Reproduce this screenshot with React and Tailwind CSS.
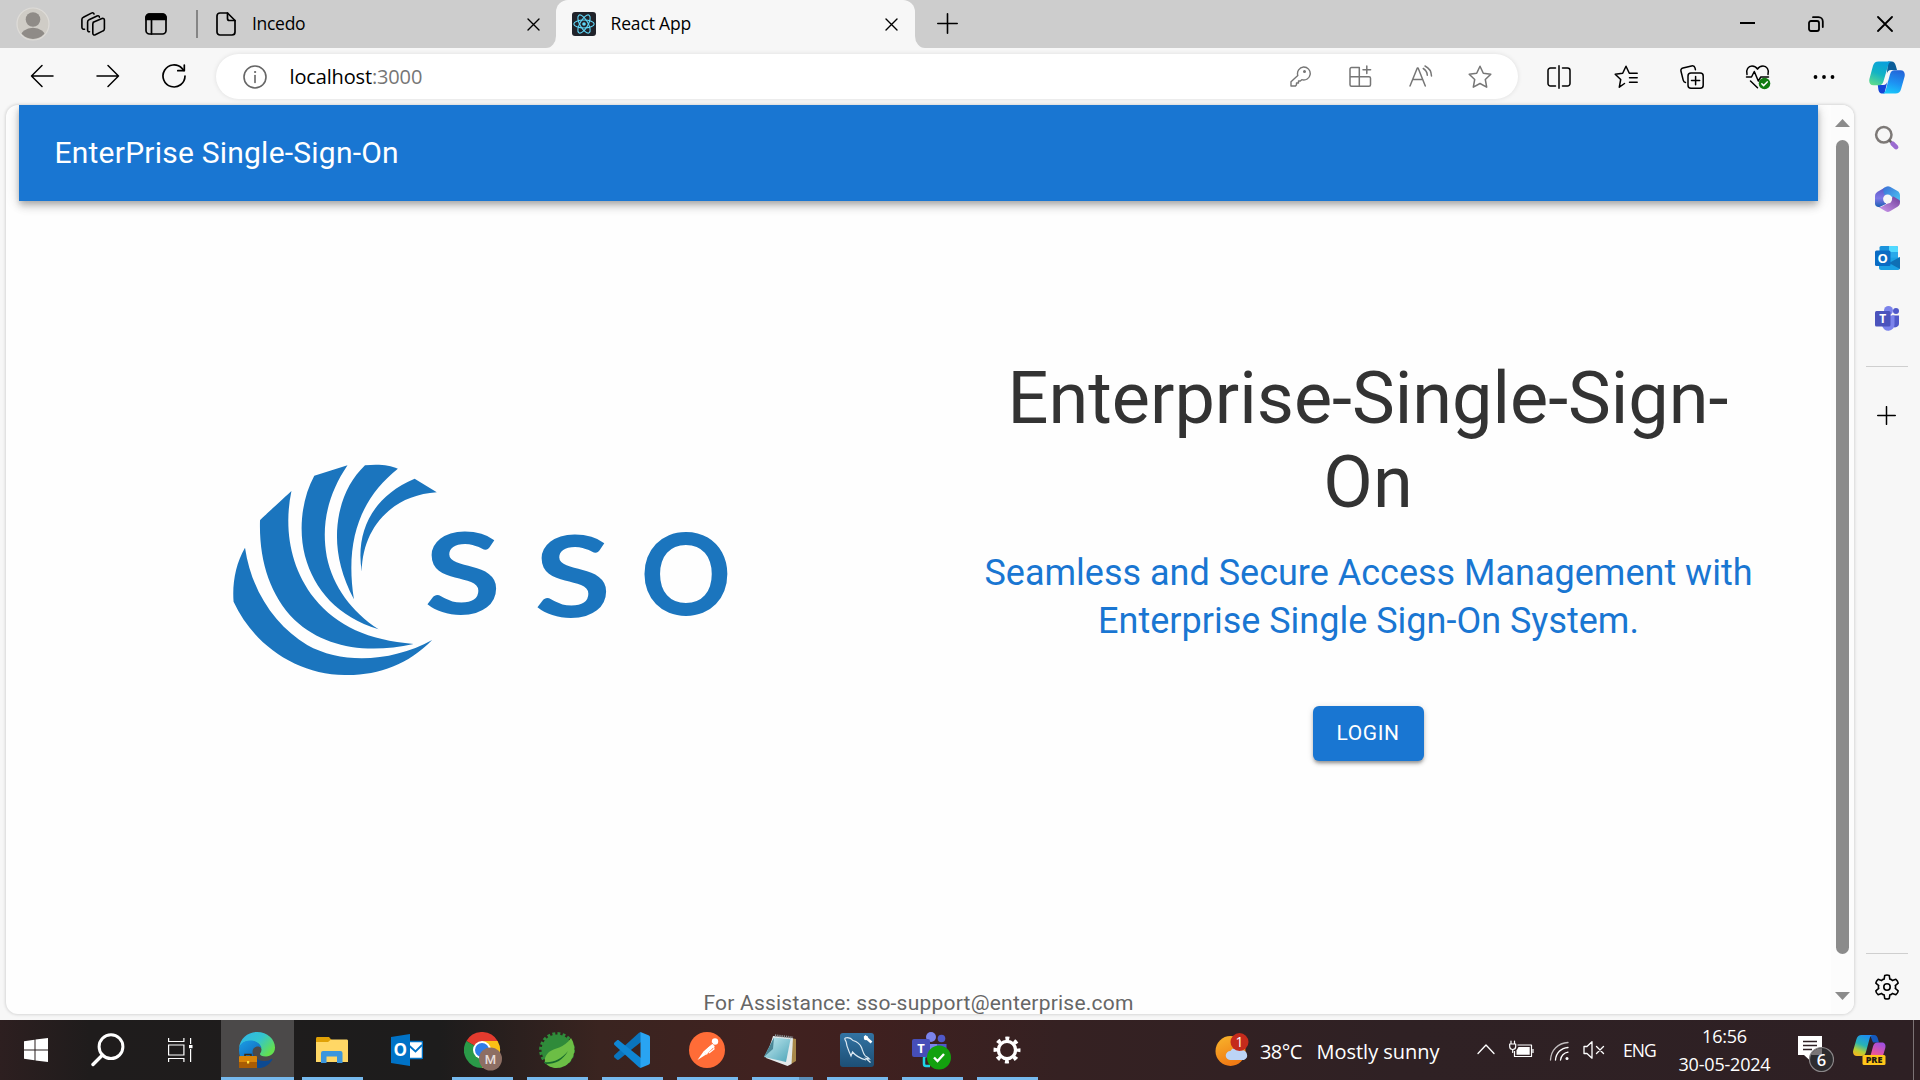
import React from "react";

const UI = "font-['Open_Sans','Noto_Sans',sans-serif]";

function Icon({ w = 24, h = 24, vb, children, sw = 1.5, className = "" }) {
  return (
    <svg
      width={w}
      height={h}
      viewBox={vb || `0 0 ${w} ${h}`}
      fill="none"
      stroke="currentColor"
      strokeWidth={sw}
      strokeLinecap="round"
      strokeLinejoin="round"
      className={`block shrink-0 ${className}`}
    >
      {children}
    </svg>
  );
}

function Slot({ className = "", children }) {
  return <div className={`flex shrink-0 items-center justify-center ${className}`}>{children}</div>;
}

const STAR = "M12 1.2l3.3 7 7.5 1-5.5 5.3 1.4 7.7L12 18.5l-6.7 3.7 1.4-7.7L1.2 9.2l7.5-1z";

function CloseX() {
  return (
    <Icon w={13} h={13} sw={1.4}>
      <path d="M1 1l11 11M12 1L1 12" />
    </Icon>
  );
}

function ReactFavicon() {
  return (
    <Icon sw={1.1}>
      <rect width="24" height="24" rx="3" fill="#20232a" stroke="none" />
      <g stroke="#61dafb">
        <ellipse cx="12" cy="12" rx="10.2" ry="4" />
        <ellipse cx="12" cy="12" rx="10.2" ry="4" transform="rotate(60 12 12)" />
        <ellipse cx="12" cy="12" rx="10.2" ry="4" transform="rotate(120 12 12)" />
        <circle cx="12" cy="12" r="1.8" fill="#61dafb" stroke="none" />
      </g>
    </Icon>
  );
}

function TabBar() {
  return (
    <div className="flex h-12 shrink-0 items-stretch bg-[#cdcdcd] text-black">
      <Slot className="w-[66px]">
        <svg width="34" height="34" viewBox="0 0 34 34">
          <defs>
            <clipPath id="avatar"><circle cx="17" cy="17" r="15" /></clipPath>
          </defs>
          <circle cx="17" cy="17" r="16" fill="#cfccc6" stroke="#dedcd8" strokeWidth="1.2" />
          <g clipPath="url(#avatar)" fill="#8f8b87">
            <circle cx="17" cy="12.5" r="7.3" />
            <ellipse cx="17" cy="30" rx="12.5" ry="9.2" />
          </g>
        </svg>
      </Slot>
      <Slot className="w-[53px]">
        <Icon w={26} h={26} sw={1.6}>
          <path d="M13.2 11.2l8.8-3.7c1.3-.5 2.4.2 2.4 1.5v8.700c0 1-.5 1.800-1.400 2.200l-7.700 3.800c-1.300.600-2.500 0-2.500-1.400v-9.300c0-.8.1-1.400.9-1.800z" />
          <path d="M9.500 20.800c-1.200.1-1.900-.6-1.900-1.700V11c0-1 .5-1.800 1.400-2.200l8-3.800c1.200-.6 2.400-.1 2.400 1.200" />
          <path d="M4.500 18.200c-1.500.1-2.600-.5-2.600-1.900V8.600c0-1 .5-1.900 1.500-2.300l8-4.200c1.200-.6 2.600-.3 2.600 1" />
        </Icon>
      </Slot>
      <Slot className="w-[74px]">
        <Icon w={22} h={22} sw={1.7}>
          <rect x="1" y="1" width="20" height="20" rx="3.500" />
          <path d="M1 6.500V4.500A3.500 3.500 0 0 1 4.500 1h13A3.500 3.500 0 0 1 21 4.500v2z" fill="currentColor" />
          <path d="M6.500 7v14" />
        </Icon>
      </Slot>
      <div className="my-[10px] ml-[3px] w-0.5 bg-[#858585]" />
      <Slot className="ml-[18px] w-5">
        <Icon w={20} h={24} sw={1.700}>
          <path d="M4 1h7.500L19 8.500V20a3 3 0 0 1-3 3H4a3 3 0 0 1-3-3V4a3 3 0 0 1 3-3z" />
          <path d="M11.500 1v5.500a2 2 0 0 0 2 2H19" />
        </Icon>
      </Slot>
      <div className="flex w-[291px] items-center pb-px pl-[16px] text-[17.500px] tracking-[-0.3px]">Incedo</div>
      <Slot className="w-[13px] pt-px"><CloseX /></Slot>
      <div className="flex w-[16px] items-end">
        <svg width="16" height="12" viewBox="0 0 16 12"><path d="M16 0v12H6A10 12 0 0 0 16 0z" fill="#f7f7f7" /></svg>
      </div>
      <div className="flex w-[359px] items-center rounded-t-[12px] bg-[#f7f7f7] pl-[16px]">
        <ReactFavicon />
        <div className="w-[289px] pb-px pl-[14.500px] text-[17.500px] tracking-[-0.15px]">React App</div>
        <Slot className="w-[13px] pt-px"><CloseX /></Slot>
      </div>
      <div className="flex w-[16px] items-end">
        <svg width="16" height="12" viewBox="0 0 16 12"><path d="M0 0v12H10A10 12 0 0 1 0 0z" fill="#f7f7f7" /></svg>
      </div>
      <Slot className="w-[32px] pb-px">
        <Icon w={21} h={21} sw={1.6}><path d="M10.500 .8v19.400M.8 10.500h19.400" /></Icon>
      </Slot>
      <div className="flex-1" />
      <Slot className="w-[69px] pb-0.5">
        <Icon w={15} h={2} sw={2}><path d="M0 1h15" /></Icon>
      </Slot>
      <Slot className="w-[69px] pr-px">
        <Icon w={16} h={16} sw={1.800}>
          <rect x="1" y="5" width="10" height="10" rx="2" />
          <path d="M5 1.200h5.500A4.300 4.300 0 0 1 14.800 5.500V11" />
        </Icon>
      </Slot>
      <Slot className="w-[69px] pb-px pr-px">
        <Icon w={16} h={16} sw={1.800}><path d="M1 1l14 14M15 1L1 15" /></Icon>
      </Slot>
    </div>
  );
}

function CopilotLogo() {
  return (
    <svg width="36" height="33" viewBox="0 0 36 33" className="mt-px">
      <defs>
        <linearGradient id="cpA" x1="0.6" y1="0" x2="0.2" y2="1">
          <stop offset="0" stopColor="#0aa0dc" /><stop offset=".5" stopColor="#12b3c4" /><stop offset="1" stopColor="#5fdc8c" />
        </linearGradient>
        <linearGradient id="cpB" x1="0.7" y1="0" x2="0.4" y2="1">
          <stop offset="0" stopColor="#2465d8" /><stop offset=".55" stopColor="#1d93f3" /><stop offset="1" stopColor="#19c6fb" />
        </linearGradient>
      </defs>
      <path d="M19 .5h3.500c2.500 0 3.600 1.800 4.300 4.200l1.200 4.300h-6c-2.400 0-3.500 1.500-4.200 4z" fill="#0b5d99" />
      <path d="M15.500 32.500h-2c-3 0-3.800-2-4.200-4.500l-.5-4h5.500c2.400 0 3.500-1.500 4.200-4z" fill="#1445d6" />
      <path d="M9.500.5H23c-2 0-3.100 1.300-3.800 3.700l-4.700 16c-.8 2.700-2 4-4.500 4H4.500C1 24.200-.3 21.500.4 18L4 4.800C4.900 1.900 6.500.5 9.500.5z" fill="url(#cpA)" />
      <path d="M26.500 32.500H13c2 0 3.100-1.300 3.800-3.700l4.200-15.500c.8-2.700 2-4 4.500-4h6c3.500 0 4.800 2.700 4.100 6.200L32 28.200c-.9 2.900-2.500 4.300-5.500 4.300z" fill="url(#cpB)" />
    </svg>
  );
}

function Toolbar() {
  return (
    <div className="flex h-[57px] shrink-0 items-center pl-[9px] text-black">
      <Slot className="w-[66px] pb-0.5">
        <Icon><path d="M23 12H1.500M12 1.500L1.500 12 12 22.500" /></Icon>
      </Slot>
      <Slot className="w-[66px] pb-0.5">
        <Icon><path d="M1 12h21.500M12 1.500L22.500 12 12 22.500" /></Icon>
      </Slot>
      <Slot className="w-[66px] pb-px">
        <Icon sw={1.700}>
          <path d="M23 12A11 11 0 1 1 20 4.400l1.800 1.900" />
          <path d="M22.300 1v5.700h-6.500" />
        </Icon>
      </Slot>
      <div className="ml-[9px] flex h-[45px] w-[1302px] shrink-0 items-center rounded-full bg-white pl-[27px] pr-2 text-[#767676] shadow-[0_0_5px_rgba(0,0,0,0.10)]">
        <Icon sw={1.6} className="text-[#666]">
          <circle cx="12" cy="12" r="11" />
          <path d="M12 10.500v7" />
          <circle cx="12" cy="7" r=".6" fill="currentColor" strokeWidth="1" />
        </Icon>
        <div className="flex-1 pl-[22.500px] text-[20px] leading-none tracking-[-0.15px]">
          <span className="text-black">localhost</span>:3000
        </div>
        <Slot className="w-[60px]">
          <Icon w={21} h={21} sw={1.4}>
            <circle cx="14.500" cy="5.500" r=".8" fill="currentColor" />
            <path d="M13.500 1a6.500 6.500 0 1 1-1.700 12.700L10.300 15H8.500v2H6.500v1.800L5.500 20H1v-4.300l6.800-6.300A6.500 6.500 0 0 1 13.500 1z" />
          </Icon>
        </Slot>
        <Slot className="w-[60px]">
          <Icon w={23} h={23}>
            <path d="M2.500 2.500h7.800v18.700H2.500A1.500 1.500 0 0 1 1 19.700V4a1.500 1.500 0 0 1 1.500-1.500zM1 11.800h19a1.500 1.500 0 0 1 1.500 1.500v6.400a1.500 1.500 0 0 1-1.500 1.500h-9.700M17.800 1v7.600M14 4.800h7.600" />
          </Icon>
        </Slot>
        <Slot className="w-[60px] pb-0.5 pl-0.5">
          <Icon w={24} h={22}>
            <path d="M1 21L8.300 3h.8L16.300 21M3.700 14.500h10M14.300 3.500a8.500 8.500 0 0 1 4 6.800M16 1a11.500 11.500 0 0 1 6.500 10" />
          </Icon>
        </Slot>
        <Slot className="w-[60px]">
          <Icon><path d={STAR} /></Icon>
        </Slot>
      </div>
      <div className="ml-[8px] flex">
        <Slot className="w-[66px]">
          <Icon>
            <path d="M8.500 3h-5A2.500 2.500 0 0 0 1 5.500v13A2.500 2.500 0 0 0 3.500 21h5M15.500 3h5A2.500 2.500 0 0 1 23 5.500v13a2.500 2.500 0 0 1-2.500 2.500h-5M12 .8v22.400" />
          </Icon>
        </Slot>
        <Slot className="w-[66px] pl-px">
          <Icon>
            <path d="M10.500 18.500L5.300 22.200l1.400-7.700L1.200 9.200l7.500-1 3.300-7 3.300 7M15.500 8.200h7.700M15.500 12.700h7.700M15.500 17.200h7.700" />
          </Icon>
        </Slot>
        <Slot className="w-[66px] pl-px">
          <Icon>
            <rect x="8" y="8" width="15.200" height="15.200" rx="3" />
            <path d="M15.600 11.500v8.200M11.500 15.600h8.200M5.500 17.500c-1.300-.2-2-1-2.300-2.300L1 6.300C.6 4.800 1.400 3.400 3 3L11.500 .900c1.700-.4 3.100.4 3.500 2l.4 1.800" />
          </Icon>
        </Slot>
        <Slot className="w-[66px] pl-0.5">
          <Icon w={26} h={26}>
            <path d="M2 10.500C.6 5.500 3.500 2 7 2c2.700 0 4.500 1.300 5.500 3.200C13.500 3.300 15.500 2 18 2c3.500 0 6.500 3.500 5 8.500M1.500 13h5l2.800-5.500 4 9.500 2.500-4h7.700M5.500 17l7 6.800" />
            <circle cx="19.500" cy="19.500" r="5.800" fill="#107c10" stroke="none" />
            <path d="M16.800 19.700l1.900 1.900 3.500-3.700" stroke="#fff" />
          </Icon>
        </Slot>
        <Slot className="w-[66px] pl-0.5">
          <Icon w={22} h={4}>
            <g fill="currentColor" stroke="none"><circle cx="2.500" cy="2" r="1.900" /><circle cx="11" cy="2" r="1.900" /><circle cx="19.500" cy="2" r="1.900" /></g>
          </Icon>
        </Slot>
        <Slot className="w-[62px]"><CopilotLogo /></Slot>
      </div>
    </div>
  );
}

function SsoLogo() {
  return (
    <svg width="560" height="270" viewBox="0 0 1568 810" preserveAspectRatio="none" fill="#1b75be">
      <path d="M126 353C145 490 215 590 300 645C400 705 540 695 650 630C580 705 500 737 405 735C270 733 150 645 94 515C90 460 100 400 126 353z" />
      <path d="M256 183C170 268 170 268 168 272C165 390 195 495 265 570C350 655 470 672 598 642C470 630 385 590 320 505C250 410 235 290 256 183z" />
      <path d="M413 106L320 137C285 205 275 300 294 378C320 480 385 560 500 598C425 545 372 470 355 380C338 280 360 190 413 106z" />
      <path d="M462 106C505 102 530 106 554 116C450 205 405 330 431 508C385 415 375 330 390 250C402 190 425 145 462 106z" />
      <path d="M601 146L663 187C540 195 455 290 453 425C435 310 480 200 601 146z" />
      <g className="font-['Lato',sans-serif] font-bold">
        <text transform="translate(628 553) scale(3.08 3)" fontSize="113" textLength="70" lengthAdjust="spacingAndGlyphs">S</text>
        <text transform="translate(936 561) scale(3.08 3)" fontSize="113" textLength="70" lengthAdjust="spacingAndGlyphs">S</text>
        <text transform="translate(1233 556) scale(2.75 3)" fontSize="113" textLength="93" lengthAdjust="spacingAndGlyphs">O</text>
      </g>
    </svg>
  );
}

function WebPage() {
  return (
    <div className="ml-[6px] mb-[6px] flex w-[1848px] shrink-0 overflow-hidden rounded-[12px] bg-[#fefefe] font-['Roboto',sans-serif] shadow-[0_0_3px_1px_rgba(0,0,0,0.13)]">
      <div className="flex w-[1825px] flex-col pl-[13px]">
        <header className="flex h-24 w-[1799px] shrink-0 items-center bg-[#1976d2] pl-[35.500px] text-[30px] leading-none text-white shadow-[0_3px_6px_-1px_rgba(0,0,0,0.2),0_6px_8px_0_rgba(0,0,0,0.14),0_1px_15px_0_rgba(0,0,0,0.12)]">
          <span className="tracking-[0.225px]">EnterPrise Single-Sign-On</span>
        </header>
        <main className="flex h-[785px] w-[1799px] shrink-0">
          <div className="w-[899px] pl-[181px] pt-[229px]"><SsoLogo /></div>
          <div className="flex w-[900px] flex-col items-center pt-[156px] text-center">
            <h1 className="w-[740px] text-[72px] leading-[84px] text-[#333]">
              Enterprise-Single-Sign-<br />On
            </h1>
            <h2 className="mt-[24px] whitespace-nowrap pl-px text-[36px] leading-[48px] text-[#1976d2]">
              Seamless and Secure Access Management with<br />Enterprise Single Sign-On System.
            </h2>
            <button className="mt-[61px] h-[55px] w-[111px] rounded-[6px] bg-[#1976d2] text-[21px] leading-none tracking-[0.6px] text-white shadow-[0_3px_3px_-1px_rgba(0,0,0,0.25),0_3px_4px_0_rgba(0,0,0,0.14),0_1px_7px_0_rgba(0,0,0,0.12)]">
              LOGIN
            </button>
          </div>
        </main>
        <footer className="w-[1799px] text-center text-[21px] leading-[34px] tracking-[0.22px] text-[#666]">
          For Assistance: sso-support@enterprise.com
        </footer>
      </div>
      <div className="flex w-[23px] flex-col items-center bg-[#fcfcfc] pt-[14px]">
        <svg width="15" height="8" viewBox="0 0 15 8"><path d="M7.500 0L15 8H0z" fill="#8b8b8b" /></svg>
        <div className="mt-[13px] h-[814px] w-[13px] rounded-full bg-[#8b8b8b]" />
        <svg className="mt-[38px]" width="15" height="8" viewBox="0 0 15 8"><path d="M7.500 8L15 0H0z" fill="#8b8b8b" /></svg>
      </div>
    </div>
  );
}

const lobes = Array.from({ length: 6 }, (_, i) => {
  const p = (deg, r) => {
    const a = ((i * 60 + deg - 90) * Math.PI) / 180;
    return `${(13 + r * Math.cos(a)).toFixed(2)} ${(13 + r * Math.sin(a)).toFixed(2)}`;
  };
  return `${i ? "L" : "M"}${p(-20, 8.4)}L${p(-11, 11.8)}Q${p(0, 12.5)} ${p(11, 11.8)}L${p(20, 8.4)}Q${p(30, 8.9)} ${p(40, 8.4)}`;
}).join("") + "z";

function Sidebar() {
  return (
    <aside className="flex flex-1 flex-col items-center pt-[20px]">
      <Icon w={26} h={26} className="mr-px">
        <circle cx="9.800" cy="9.800" r="7.700" stroke="#7d7977" strokeWidth="2.500" />
        <path d="M15.500 15.500l1.500 1.500" stroke="#6b6867" strokeWidth="2.500" />
        <path d="M18.600 18.600l3.500 3.500" stroke="#9a6bd0" strokeWidth="4.600" />
      </Icon>
      <svg className="ml-px mt-[35px]" width="25" height="26" viewBox="0 0 25 26">
        <defs>
          <linearGradient id="m1" x1="0" y1="0" x2="0" y2="1"><stop offset="0" stopColor="#5a55c4" /><stop offset=".55" stopColor="#7f78e6" /><stop offset="1" stopColor="#1b5fb4" /></linearGradient>
          <linearGradient id="m2" x1="0" y1="0" x2="1" y2="1"><stop offset="0" stopColor="#3a6fd6" /><stop offset="1" stopColor="#4dc8f4" /></linearGradient>
          <linearGradient id="m3" x1="0" y1="1" x2="1" y2="0"><stop offset="0" stopColor="#cf9cf0" /><stop offset="1" stopColor="#6f3d99" /></linearGradient>
        </defs>
        <path d="M10 1.500L3 5.500C1 6.700 0 8 0 10.500v7C0 20 2 21.500 4.500 21l6.500-3V8.500L10 1.500z" fill="url(#m1)" />
        <path d="M8.500 2.200L11 .8c1.500-.9 2.500-.9 4 0L22.500 5C24.200 6 25 7.500 25 9.500V16l-9-5.500-5-1.500c-1.500 0-3-1-2.500-6.800z" fill="url(#m2)" />
        <path d="M25 15.500c0 3-.6 4-2.500 5.200L15 25.200c-1.500.9-2.800.9-4.300 0L3.500 21c2 .3 3.500-.3 5-1.200l6-3.500 3.500-6 5 3c1.300.7 2 1.500 2 2.200z" fill="url(#m3)" />
        <circle cx="12.600" cy="13" r="4.500" fill="#f7f7f7" />
      </svg>
      <svg className="ml-px mt-[34px]" width="25" height="24" viewBox="0 0 25 24">
        <rect x="4.500" width="18.500" height="14" rx="1.500" fill="#1b93dc" />
        <path d="M14 0h7.500A1.500 1.500 0 0 1 23 1.500V6h-9z" fill="#50d9ff" />
        <path d="M14 6h9v6h-9z" fill="#28a8ea" />
        <path d="M4 12l21-.5V22a2 2 0 0 1-2 2H6a2 2 0 0 1-2-2z" fill="#1aa0e4" />
        <path d="M25 11v12L14 17z" fill="#0f6fb5" />
        <rect y="4.500" width="15.500" height="15.500" rx="1.500" fill="#0a6cc4" />
        <text x="7.800" y="17" textAnchor="middle" fill="#fff" className="font-['Open_Sans',sans-serif] text-[13px] font-bold">O</text>
      </svg>
      <svg className="ml-px mt-[36px]" width="25" height="25" viewBox="0 0 25 25">
        <circle cx="13.500" cy="4.500" r="4.500" fill="#7b83eb" /><circle cx="21" cy="5" r="3" fill="#5059c9" />
        <path d="M17 9.500h7v7.500a4 4 0 0 1-7 3z" fill="#5059c9" />
        <path d="M7 9.500h12.500V18a6 6 0 0 1-12.500 1z" fill="#7b83eb" />
        <rect y="5" width="15.500" height="15.500" rx="1.500" fill="#4b53bc" />
        <text x="7.800" y="17" textAnchor="middle" fill="#fff" className="font-['Open_Sans',sans-serif] text-[12px] font-bold">T</text>
      </svg>
      <div className="mr-px mt-[35px] h-px w-[42px] bg-[#cfcfcf]" />
      <Icon w={19} h={19} sw={1.500} className="mr-0.5 mt-[39px]"><path d="M9.500 .700v17.600M.700 9.500h17.600" /></Icon>
      <div className="mr-px mt-[528px] h-px w-[42px] bg-[#cfcfcf]" />
      <Icon w={26} h={26} sw={1.600} className="mr-px mt-5">
        <path d={lobes} />
        <circle cx="13" cy="13" r="3.200" />
      </Icon>
    </aside>
  );
}

function EdgeIcon() {
  return (
    <svg width="36" height="36" viewBox="0 0 36 36" className="mr-0.5">
      <defs>
        <linearGradient id="eg" x1="0" y1="0" x2="1" y2=".6"><stop offset="0" stopColor="#2fb4ea" /><stop offset=".55" stopColor="#33c5cf" /><stop offset="1" stopColor="#64e04f" /></linearGradient>
        <linearGradient id="eb" x1="0" y1="0" x2=".6" y2="1"><stop offset="0" stopColor="#1b9ee6" /><stop offset="1" stopColor="#0f5cb0" /></linearGradient>
      </defs>
      <path d="M0 16C1 6.500 9 0 18 0c10.500 0 18 7.500 18 15.500C36 21 32 24.500 27 24.500c-4 0-6-1.200-6-2.500 0-1 1.500-1.800 1.500-4.500C22 13 17.500 9 11.500 9 6 9 2 11.500 0 16z" fill="url(#eg)" />
      <path d="M0 18C0 12 5 8.500 11 8.500c6.500 0 11 4 11.500 7.500-2-2-5.500-2.500-8 .5C12 20 14 28 23 36H17C7 36 0 28 0 18z" fill="url(#eb)" />
      <path d="M14 20c0 6 6 9 12 9 3 0 5-1 6.500-2 .8-.4 1 .2.600.9C30 33 25 36 19 36c-4 0-6-6-5-16z" fill="#0d4a91" />
      <rect y="24" width="18" height="12" rx="1" fill="#d98509" /><rect y="30" width="18" height="6" fill="#a85c04" />
      <path d="M6 24v-1.500h6V24" fill="none" stroke="#3d2a10" strokeWidth="1.500" /><rect x="8" y="29" width="2.200" height="2.500" fill="#ffe03a" />
    </svg>
  );
}

function FolderIcon() {
  return (
    <svg width="32" height="26" viewBox="0 0 32 26">
      <path d="M0 1.500C0 .7.500 0 1.500 0H13l2.500 3L13 7H0z" fill="#e0a106" />
      <path d="M0 5h12l3-2.500h15.500c1 0 1.500.5 1.500 1.500v21H0z" fill="#ffd765" />
      <path d="M5 26V16a2 2 0 0 1 2-2h17.500a2 2 0 0 1 2 2v10h-5.500v-6.500H10.500V26z" fill="#3b96dd" />
    </svg>
  );
}

function OutlookIcon() {
  return (
    <svg width="32" height="32" viewBox="0 0 32 32">
      <rect x="17" y="7.500" width="14.500" height="17" rx="1" fill="#fff" stroke="#0072c6" strokeWidth="1.500" />
      <path d="M18.500 12l6 5.500L31 11" fill="none" stroke="#0072c6" strokeWidth="1.800" />
      <path d="M0 3l19-3v32L0 29z" fill="#0072c6" />
      <text x="9.200" y="22" textAnchor="middle" fill="#fff" className="font-['Open_Sans',sans-serif] text-[17px] font-bold">O</text>
    </svg>
  );
}

function ChromeIcon() {
  return (
    <svg width="40" height="40" viewBox="0 0 40 40" className="ml-1 mt-[3px]">
      <path d="M18 18L2.400 9A18 18 0 0 1 33.600 9z" fill="#e33b2e" />
      <path d="M18 18V9h15.600A18 18 0 0 1 18 36z" fill="#fbc116" />
      <path d="M18 18l7.800 4.500L18 36A18 18 0 0 1 2.400 9z" fill="#2a9a48" />
      <circle cx="18" cy="18" r="9" fill="#fff" /><circle cx="18" cy="18" r="7" fill="#2f7de9" />
      <circle cx="26.500" cy="27" r="11.500" fill="#8d6e63" />
      <text x="26.500" y="31.800" textAnchor="middle" fill="#e6dcd8" className="font-['Roboto',sans-serif] text-[13px] font-medium">M</text>
    </svg>
  );
}

function SpringIcon() {
  return (
    <svg width="36" height="36" viewBox="0 0 36 36">
      <circle cx="18" cy="18" r="15.500" fill="#2f8b3a" />
      <circle cx="18" cy="18" r="16.300" fill="none" stroke="#2f8b3a" strokeWidth="3.200" strokeDasharray="2.900 2.220" />
      <path d="M32 6c3 5 4.500 11 2.500 17-2.500 8-9 13-17 13-4 0-8.500-1.500-11-5-1.500-3-.500-7.500 3.500-11 5-4 15-3.500 22-14z" fill="#6cbe45" />
      <path d="M5 30c8 1 17-2 24-11-5 9-12 13-22 13z" fill="#176b2c" />
    </svg>
  );
}

function VsCodeIcon() {
  return (
    <svg width="36" height="36" viewBox="0 0 36 36">
      <path d="M27 0v10L5 27.500c-.8.600-1.600.5-2.200 0L.5 25.400c-.7-.7-.7-1.600 0-2.300L25 .8z" fill="#0a74bd" />
      <path d="M27 36V26L5 8.500c-.8-.6-1.600-.5-2.200 0L.5 10.600c-.7.7-.7 1.600 0 2.300L25 35.200z" fill="#0f86d3" />
      <path d="M26.500 0L35 3.600c.7.300 1 .9 1 1.600v25.600c0 .7-.3 1.300-1 1.600L26.500 36z" fill="#29a4f2" />
    </svg>
  );
}

function PostmanIcon() {
  return (
    <svg width="36" height="36" viewBox="0 0 36 36">
      <circle cx="18" cy="18" r="18" fill="#ff6c37" />
      <circle cx="26" cy="9.500" r="3.200" fill="#fff" />
      <path d="M23 11.500l2.800 2.800-8 8.500-3.500-3z" fill="#fff" />
      <path d="M14.500 19.500l3 2.700L8.500 28z" fill="#fff" />
      <path d="M16 17l8-6M19 21.500l6-6" stroke="#ff6c37" strokeWidth=".9" />
      <path d="M24.500 14.500l.5 2.500-5 4" stroke="#fff" strokeWidth="1.200" fill="none" />
    </svg>
  );
}

function NotepadIcon() {
  return (
    <svg width="34" height="32" viewBox="0 0 34 32" className="mr-1">
      <defs><linearGradient id="np" x1="0" y1="0" x2="1" y2="1"><stop offset="0" stopColor="#c6ecf2" /><stop offset="1" stopColor="#4ea4b8" /></linearGradient></defs>
      <path d="M28 4l5 1v22l-5 3z" fill="#a8884a" />
      <path d="M10 2l20 2-1.500 26-4 2L3 24z" fill="#e4eaec" />
      <path d="M11 3.500l16.500 1.800L23 28 1 23z" fill="url(#np)" />
      <path d="M11 3.500L1 23l9-8z" fill="#4b8797" />
      <path d="M12 1.500l18 2" stroke="#8d989b" strokeWidth="2.400" strokeDasharray="1.200 1" />
    </svg>
  );
}

function MysqlIcon() {
  return (
    <svg width="34" height="34" viewBox="0 0 34 34" fill="none">
      <defs><linearGradient id="my" x1="0" y1="0" x2="0" y2="1"><stop offset="0" stopColor="#3273a3" /><stop offset="1" stopColor="#1d4f75" /></linearGradient></defs>
      <rect width="34" height="34" rx="3" fill="url(#my)" />
      <path d="M5 5c3-1 6 0 8 2.500 4 1 7 3.500 8.500 7 1.200 3 1.500 5.500 3.500 8 1 1.200 3 1.500 4.500 3.500l-3.500-.5 4.500 4M5 5c-1 1.500 1 2.500 1.300 4.500C6.500 13 8 16 9.500 19.500l1.500 3.500 1.500-4c2.500 3 6 6 13.500 8" stroke="#dce9f2" strokeWidth="1.200" />
      <path d="M24.500 3l3 3M27 5.500l4.500 4" stroke="#fff" strokeWidth="2.600" />
      <circle cx="26" cy="5" r="2.200" fill="#fff" />
    </svg>
  );
}

function TeamsIcon() {
  return (
    <svg width="40" height="38" viewBox="0 0 40 38" className="mt-0.5">
      <circle cx="19" cy="5" r="5" fill="#7b83eb" /><circle cx="29.500" cy="6.500" r="3.800" fill="#5059c9" />
      <path d="M17 12h17.500v8H17z" fill="#5059c9" />
      <path d="M17 12h8v8h-8z" fill="#7b83eb" />
      <path d="M18 24h-4a2 2 0 0 0-2 2v6a2 2 0 0 0 2 2h4" stroke="#1ed6e6" strokeWidth="2.500" fill="none" />
      <rect y="7" width="18" height="18" rx="2" fill="#464eb8" />
      <text x="9" y="20.500" textAnchor="middle" fill="#fff" className="font-['Open_Sans',sans-serif] text-[13px] font-bold">T</text>
      <circle cx="27" cy="25.500" r="12" fill="#13a10e" />
      <path d="M22 25.500l3.500 3.500 6.500-7" stroke="#fff" strokeWidth="2.400" fill="none" />
    </svg>
  );
}

function GearIcon() {
  return (
    <svg width="28" height="28" viewBox="0 0 28 28" fill="none" stroke="#fff">
      <circle cx="14" cy="14" r="8.600" strokeWidth="3.400" />
      <circle cx="14" cy="14" r="11.600" strokeWidth="3.800" strokeDasharray="4 5.110" strokeDashoffset="2" />
    </svg>
  );
}

const APPS = [
  { id: "explorer", icon: <FolderIcon />, bar: "full" },
  { id: "outlook", icon: <OutlookIcon />, bar: "none" },
  { id: "chrome", icon: <ChromeIcon />, bar: "full" },
  { id: "spring", icon: <SpringIcon />, bar: "full" },
  { id: "vscode", icon: <VsCodeIcon />, bar: "full" },
  { id: "postman", icon: <PostmanIcon />, bar: "full" },
  { id: "notepad", icon: <NotepadIcon />, bar: "split" },
  { id: "mysql", icon: <MysqlIcon />, bar: "full" },
  { id: "teams", icon: <TeamsIcon />, bar: "full" },
  { id: "settings", icon: <GearIcon />, bar: "full" },
];

function Taskbar() {
  return (
    <div className={`flex h-[60px] shrink-0 bg-[linear-gradient(90deg,#2d1f20_0px,#1f1c1c_90px,#1d1c1c_440px,#3a2420_600px,#402220_760px,#40201f_850px,#352122_1060px,#2f2124_1400px,#2e2024_1920px)] text-white ${UI}`}>
      <Slot className="w-[72px]">
        <svg width="24" height="24" viewBox="0 0 24 24" fill="#fff"><path d="M0 3.200L10.500 1.800V11.500H0zM11.500 1.600L24 0v11.500H11.500zM0 12.500h10.500v9.700L0 20.800zM11.500 12.500H24V24l-12.500-1.600z" /></svg>
      </Slot>
      <Slot className="w-[72px] pr-px">
        <svg width="34" height="34" viewBox="0 0 34 34" fill="none" stroke="#fff" strokeLinecap="round"><circle cx="20" cy="13.700" r="11.900" strokeWidth="3" /><path d="M11.500 22L2 31.500" strokeWidth="3.400" /></svg>
      </Slot>
      <Slot className="w-[72px]">
        <svg width="25" height="24" viewBox="0 0 25 24" fill="none" stroke="#fff" strokeWidth="1.200"><path d="M.6 0v3.500h15.300V0M.6 7h15.300v10H.600zM.6 24v-3.500h15.300V24M22.600 0v6M22.600 11v13" /><path d="M21 7h3.500v3.200H21z" fill="#fff" stroke="none" /></svg>
      </Slot>
      <div className="ml-[5px] mr-px flex w-[73px] flex-col bg-[#4b4949]">
        <Slot className="h-[57px] pt-[3px]"><EdgeIcon /></Slot>
        <div className="h-[3px] bg-[#76b9ed]" />
      </div>
      {APPS.map((a) => (
        <div key={a.id} className="flex w-[75px] shrink-0 flex-col items-center">
          <Slot className="h-[57px] w-full pr-px pt-[3px]">{a.icon}</Slot>
          {a.bar !== "none" && (
            <div className="flex h-[3px] w-[61px] bg-[#76b9ed]">
              {a.bar === "split" && <div className="ml-auto w-[14px] bg-[#5a8db8]" />}
            </div>
          )}
        </div>
      ))}
      <div className="ml-[170px] flex w-[34px] items-center">
        <svg width="34" height="34" viewBox="0 0 34 34" className="-mt-0.5">
          <defs><linearGradient id="sun" x1="0" y1="0" x2=".4" y2="1"><stop offset="0" stopColor="#f8b62c" /><stop offset="1" stopColor="#f07a14" /></linearGradient></defs>
          <circle cx="15.500" cy="19" r="15" fill="url(#sun)" />
          <path d="M15 28a4.500 4.500 0 0 1 .5-9 6 6 0 0 1 10.500-.500 5 5 0 0 1 3 9.500z" fill="#bcd4f6" />
          <circle cx="24.500" cy="10" r="9" fill="#c42b1c" />
          <text x="24.500" y="15" textAnchor="middle" fill="#fff" className="text-[14px]">1</text>
        </svg>
      </div>
      <div className="flex w-[57px] items-center pl-[11px] pt-[3px] text-[20px] tracking-[-0.6px]">38°C</div>
      <div className="flex w-[171px] items-center whitespace-nowrap pl-[10.500px] pt-[3px] text-[20px] tracking-[-0.02px]">Mostly sunny</div>
      <Slot className="w-[18px] pb-0.5">
        <Icon w={18} h={12} sw={1.300}><path d="M1 10.500l8-8.500 8 8.500" /></Icon>
      </Slot>
      <Slot className="ml-[14px] w-[26px] pb-px">
        <Icon w={26} h={20} sw={1.200}>
          <path d="M8.500 5H22.500v11.500H5.500V11M24 9v4" strokeLinecap="butt" />
          <path d="M9.500 7H20.700v7.700H7.500V10.500z" fill="#fff" stroke="none" />
          <path d="M2 1v3M5.500 1v3M.7 4h6v2.500a3 3 0 0 1-6 0zM3.700 9.500v3" />
        </Icon>
      </Slot>
      <Slot className="ml-[13px] w-[22px] pt-0.5">
        <Icon w={21} h={20} sw={1.300}>
          <path d="M1.500 19C2 9 9 2 19 1.500" opacity=".7" />
          <path d="M6.500 19C7 12 12 7 19 6.500M11.500 19c.4-4 3.500-7.300 7.500-7.800" />
          <circle cx="18" cy="17.500" r="1.500" fill="#fff" stroke="none" />
        </Icon>
      </Slot>
      <Slot className="ml-[13px] w-[22px]">
        <Icon w={22} h={18} sw={1.300}>
          <path d="M1 5.500h3L9 .8v16.400L4 12.500H1zM13.500 5.500l7 7M20.500 5.500l-7 7" />
        </Icon>
      </Slot>
      <div className="ml-[18px] flex w-[54px] items-center text-[17.500px] tracking-[-0.9px]">ENG</div>
      <div className="flex w-[95px] flex-col items-center justify-center whitespace-nowrap text-[18px] leading-[28px] tracking-[-0.2px]">
        <div>16:56</div>
        <div>30-05-2024</div>
      </div>
      <div className="ml-[26px] flex w-[36px] items-center">
        <svg width="36" height="38" viewBox="0 0 36 38" className="mt-[8px]">
          <path d="M0 1h24v19H12v5.500L6 20H0z" fill="#fff" />
          <path d="M5 6.500h14M5 10.500h14M5 14.500h9" stroke="#2e2024" strokeWidth="1.300" />
          <circle cx="23.500" cy="24.500" r="12" fill="#2d2c2e" stroke="#8b8789" strokeWidth="1.200" />
          <path d="M12.200 22A11.500 11.500 0 0 1 24 13.200V20H13z" fill="#7a7677" />
          <text x="23.500" y="30.500" textAnchor="middle" fill="#fff" className="text-[16.500px] font-semibold">6</text>
        </svg>
      </div>
      <div className="ml-[19px] flex w-[34px] items-center">
        <svg width="34" height="32" viewBox="0 0 34 32">
          <defs>
            <linearGradient id="c1" x1=".6" y1="0" x2=".2" y2="1"><stop offset="0" stopColor="#1d8ef0" /><stop offset=".45" stopColor="#28b4b4" /><stop offset=".75" stopColor="#b6cf35" /><stop offset="1" stopColor="#f7b51e" /></linearGradient>
            <linearGradient id="c2" x1=".7" y1="0" x2=".3" y2="1"><stop offset="0" stopColor="#a04fe0" /><stop offset=".55" stopColor="#e8559c" /><stop offset="1" stopColor="#fb8a4e" /></linearGradient>
          </defs>
          <path d="M17 1h4c2.500 0 3.500 2 4 4l1 3.500h-6z" fill="#1459bd" />
          <path d="M8.500 1H20c-2 0-2.800 1.500-3.400 3.500L13 18c-.8 2.500-2 4-4.500 4H4c-3 0-4.500-2.500-3.800-5.500L3.500 5C4.300 2.500 6 1 8.500 1z" fill="url(#c1)" />
          <path d="M24 29H13c2 0 3-1.500 3.500-3.500L20 12.500c.8-2.500 2-4 4.500-4H29c3 0 4 2.500 3.300 5.500L29 25c-.8 2.500-2.500 4-5 4z" fill="url(#c2)" />
          <rect x="9.500" y="21" width="23" height="10" rx="1.500" fill="#ffc61a" />
          <text x="21" y="29" textAnchor="middle" fill="#221a10" className="text-[9px] font-extrabold">PRE</text>
        </svg>
      </div>
      <div className="ml-auto mr-[6px] w-px bg-[#7b7375]" />
    </div>
  );
}

export default function App() {
  return (
    <div className="flex h-[1080px] w-[1920px] flex-col overflow-hidden bg-[#f7f7f7]">
      <div className={UI}>
        <TabBar />
        <Toolbar />
      </div>
      <div className="flex h-[915px] shrink-0">
        <WebPage />
        <Sidebar />
      </div>
      <Taskbar />
    </div>
  );
}
